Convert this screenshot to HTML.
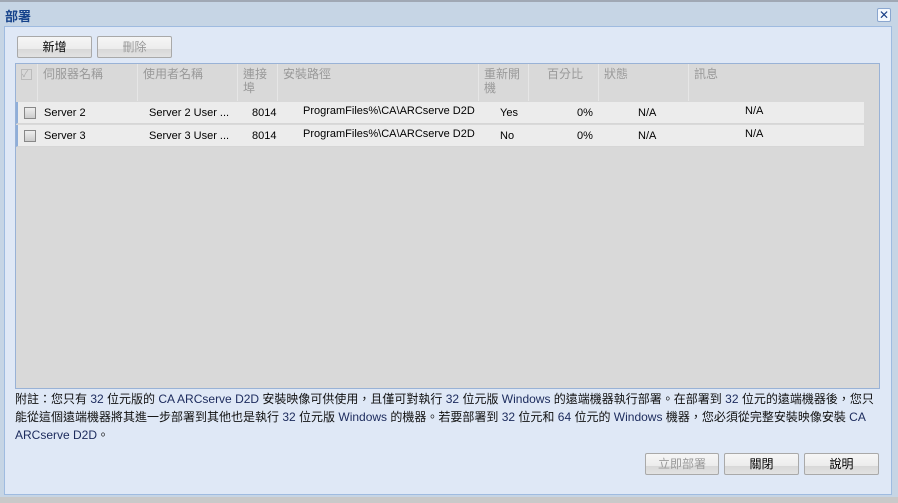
<!DOCTYPE html>
<html><head><meta charset="utf-8"><style>
*{margin:0;padding:0;box-sizing:border-box}
body{width:898px;height:503px;overflow:hidden;background:#c9c9c9;font-family:"Liberation Sans","Noto Sans CJK TC",sans-serif;font-size:11px;color:#000;position:relative}
.win{position:absolute;left:0;top:0;width:898px;height:497px;background:#c6d5e5;border-top:2px solid #a0a8b4}
.title{position:absolute;left:5px;top:4px;font-size:13px;font-weight:bold;color:#15428b}
.close{position:absolute;left:877px;top:6px;width:14px;height:14px;border:1px solid #8aa6cf;background:#f4f8fd;border-radius:2px;color:#1a3f86;font-size:12px;line-height:12px;text-align:center}
.panel{position:absolute;left:4px;top:24px;width:888px;height:469px;background:#dfe8f6;border:1px solid #9fbbe0}
.btn{position:absolute;height:22px;border:1px solid #a9a9a9;border-radius:2px;background:linear-gradient(#f6f6f6 0,#ececec 60%,#d8d8d8 61%,#e2e2e2 100%);text-align:center;line-height:20px;font-size:12px}
.dis{color:#999}
.grid{position:absolute;left:15px;top:61px;width:865px;height:326px;background:#d9d9d9;border:1px solid #99b2d6}
.hd{position:absolute;top:0;height:37px;color:#999;font-size:12px;padding:3px 0 0 5px;line-height:14px;border-right:1px solid #e6e6e6}
.row{position:absolute;left:0;width:848px;height:22px;background:#ececec;border-bottom:1px solid #d6d6d6;border-left:2px solid #8faed9;font-size:11px}
.row span{position:absolute;top:5px}
.cb{position:absolute;width:12px;height:12px;border:1px solid #888;background:linear-gradient(#eee,#ccc);left:6px;top:5px}
.note{position:absolute;left:15px;top:388px;width:870px;font-size:12px;line-height:18px;color:#111}
.n{color:#1b2a5c}
</style></head><body>
<div class="win">
<div class="title">部署</div>
<div class="close">✕</div>
<div class="panel"></div>
<div class="btn" style="left:17px;top:34px;width:75px">新增</div>
<div class="btn dis" style="left:97px;top:34px;width:75px">刪除</div>
<div class="grid">
 <div class="hd" style="left:0;width:22px"><div style="width:11px;height:11px;border:1px solid #bbb;color:#aaa;font-size:9px;line-height:9px;margin-top:2px">✓</div></div>
 <div class="hd" style="left:22px;width:100px">伺服器名稱</div>
 <div class="hd" style="left:122px;width:100px">使用者名稱</div>
 <div class="hd" style="left:222px;width:40px">連接<br>埠</div>
 <div class="hd" style="left:262px;width:201px">安裝路徑</div>
 <div class="hd" style="left:463px;width:50px">重新開<br>機</div>
 <div class="hd" style="left:513px;width:70px;padding-left:18px">百分比</div>
 <div class="hd" style="left:583px;width:90px">狀態</div>
 <div class="hd" style="left:673px;width:190px;border:none">訊息</div>
 <div class="row" style="top:38px"><div class="cb"></div><span style="left:26px">Server 2</span><span style="left:131px">Server 2 User ...</span><span style="left:234px">8014</span><span style="left:285px;top:3px">ProgramFiles%\CA\ARCserve D2D</span><span style="left:482px">Yes</span><span style="left:559px">0%</span><span style="left:620px">N/A</span><span style="left:727px;top:3px">N/A</span></div>
 <div class="row" style="top:61px"><div class="cb"></div><span style="left:26px">Server 3</span><span style="left:131px">Server 3 User ...</span><span style="left:234px">8014</span><span style="left:285px;top:3px">ProgramFiles%\CA\ARCserve D2D</span><span style="left:482px">No</span><span style="left:559px">0%</span><span style="left:620px">N/A</span><span style="left:727px;top:3px">N/A</span></div>
</div>
<div class="note">附註：您只有 <span class="n">32</span> 位元版的 <span class="n">CA ARCserve D2D</span> 安裝映像可供使用，且僅可對執行 <span class="n">32</span> 位元版 <span class="n">Windows</span> 的遠端機器執行部署。在部署到 <span class="n">32</span> 位元的遠端機器後，您只能從這個遠端機器將其進一步部署到其他也是執行 <span class="n">32</span> 位元版 <span class="n">Windows</span> 的機器。若要部署到 <span class="n">32</span> 位元和 <span class="n">64</span> 位元的 <span class="n">Windows</span> 機器，您必須從完整安裝映像安裝 <span class="n">CA ARCserve D2D</span>。</div>
<div class="btn dis" style="left:645px;top:451px;width:74px">立即部署</div>
<div class="btn" style="left:724px;top:451px;width:75px">關閉</div>
<div class="btn" style="left:804px;top:451px;width:75px">說明</div>
</div>
</body></html>
